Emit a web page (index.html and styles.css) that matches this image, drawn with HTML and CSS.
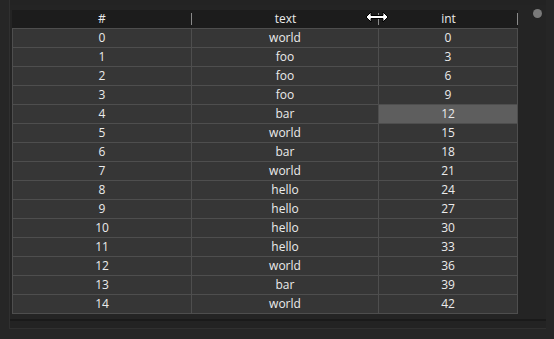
FILE: index.html
```html
<!DOCTYPE html>
<html>
<head>
<meta charset="utf-8">
<link rel="stylesheet" href="styles.css">
</head>
<body>
<div class="frame">
  <div class="panel">
    <div class="content">
      <div class="table">
        <div class="header">
          <div class="hcell">#</div>
          <div class="hcell">text</div>
          <div class="hcell">int</div>
        </div>
        <div class="row"><div class="cell">0</div><div class="cell">world</div><div class="cell">0</div></div>
        <div class="row"><div class="cell">1</div><div class="cell">foo</div><div class="cell">3</div></div>
        <div class="row"><div class="cell">2</div><div class="cell">foo</div><div class="cell">6</div></div>
        <div class="row"><div class="cell">3</div><div class="cell">foo</div><div class="cell">9</div></div>
        <div class="row"><div class="cell">4</div><div class="cell">bar</div><div class="cell sel">12</div></div>
        <div class="row"><div class="cell">5</div><div class="cell">world</div><div class="cell">15</div></div>
        <div class="row"><div class="cell">6</div><div class="cell">bar</div><div class="cell">18</div></div>
        <div class="row"><div class="cell">7</div><div class="cell">world</div><div class="cell">21</div></div>
        <div class="row"><div class="cell">8</div><div class="cell">hello</div><div class="cell">24</div></div>
        <div class="row"><div class="cell">9</div><div class="cell">hello</div><div class="cell">27</div></div>
        <div class="row"><div class="cell">10</div><div class="cell">hello</div><div class="cell">30</div></div>
        <div class="row"><div class="cell">11</div><div class="cell">hello</div><div class="cell">33</div></div>
        <div class="row"><div class="cell">12</div><div class="cell">world</div><div class="cell">36</div></div>
        <div class="row"><div class="cell">13</div><div class="cell">bar</div><div class="cell">39</div></div>
        <div class="row"><div class="cell">14</div><div class="cell">world</div><div class="cell">42</div></div>
      </div>
      <div class="scroll"><div class="knob"></div></div>
    </div>
  </div>
</div>
<svg class="cursor" width="24" height="12" viewBox="0 0 24 12">
  <path d="M1 6 L6 1 L6 4.5 L18 4.5 L18 1 L23 6 L18 11 L18 7.5 L6 7.5 L6 11 Z" fill="#fff" stroke="#000" stroke-width="1" stroke-linejoin="miter"/>
</svg>
</body>
</html>
```
FILE: styles.css
```css
html, body {
  margin: 0;
  padding: 0;
}
body {
  width: 554px;
  height: 339px;
  background: #1f1f1f;
  font-family: "Open Sans", "Noto Sans", sans-serif;
  font-size: 12px;
  color: #ebebeb;
  position: relative;
  overflow: hidden;
}
.frame {
  padding: 0 0 0 9px;
  height: 339px;
  box-sizing: border-box;
  background: #262626;
}
.panel {
  width: 537px;
  height: 329px;
  background: #232323;
  border-left: 1px solid #303030;
  border-bottom: 1px solid #303030;
  box-sizing: border-box;
  padding: 5px 0 0 0;
}
.content {
  display: flex;
  height: 316px;
  background: #242424;
  padding: 5px 0 0 2px;
  box-sizing: border-box;
  border-bottom: 2px solid #1a1a1a;
}
.table {
  width: 506px;
  display: flex;
  flex-direction: column;
}
.header {
  display: grid;
  grid-template-columns: 180px 187px 139px;
  height: 18px;
  background: #1c1c1c;
}
.hcell {
  text-align: center;
  line-height: 18px;
  position: relative;
}
.hcell::after {
  content: "";
  position: absolute;
  right: 0;
  top: 3px;
  height: 12px;
  width: 1px;
  background: #8a8a8a;
}
.row {
  display: grid;
  grid-template-columns: 180px 187px 139px;
  height: 19px;
  background: #363636;
  border-bottom: 1px solid #4e4e4e;
  box-sizing: border-box;
}
.header + .row {
  border-top: 1px solid #4e4e4e;
  height: 20px;
}
.cell {
  text-align: center;
  line-height: 18px;
  border-right: 1px solid #4e4e4e;
}
.cell:first-child {
  border-left: 1px solid #4e4e4e;
}
.cell.sel {
  background: #5e5e5e;
}
.scroll {
  width: 26px;
  position: relative;
}
.knob {
  position: absolute;
  left: 15px;
  top: -1px;
  width: 9px;
  height: 9px;
  border-radius: 50%;
  background: #7a7a7a;
}
.cursor {
  position: absolute;
  left: 365px;
  top: 11px;
}
```
